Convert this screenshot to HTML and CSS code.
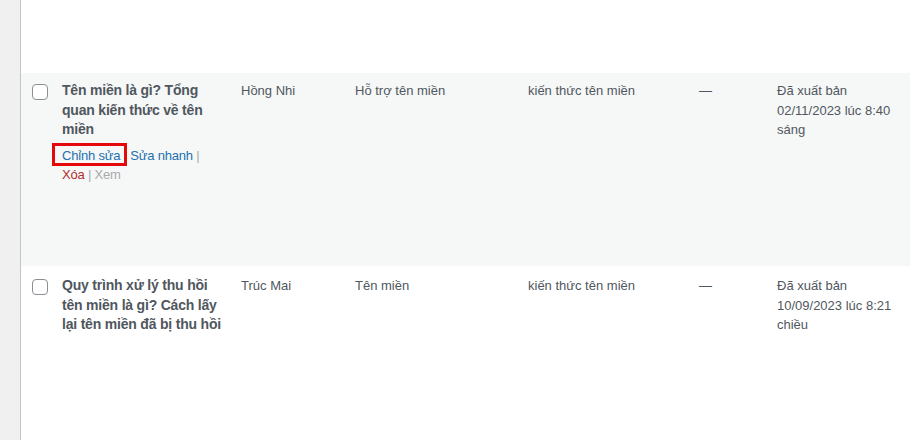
FILE: index.html
```html
<!DOCTYPE html>
<html lang="vi">
<head>
  <meta charset="UTF-8" />
  <meta name="viewport" content="width=device-width, initial-scale=1.0"/>
  <title>Bài viết</title>
  <link rel="stylesheet" href="styles.css">
</head>
<body>
  <div class="layout">
    <div class="sidebar"></div>

    <div class="content">
      <div class="row-end"></div>

      <table class="posts">
        <colgroup>
          <col class="c-check">
          <col class="c-title">
          <col class="c-author">
          <col class="c-cats">
          <col class="c-tags">
          <col class="c-comments">
          <col class="c-date">
        </colgroup>
        <tr class="alt">
          <td class="check"><span class="checkbox"></span></td>
          <td>
            <strong class="row-title">Tên miền là gì? Tổng quan kiến thức về tên miền</strong>
            <div class="row-actions">
              <span class="edit highlight"><a href="#">Chỉnh sửa</a></span> <span class="sep">|</span>
              <a href="#">Sửa nhanh</a> <span class="sep">|</span>
              <a href="#" class="trash">Xóa</a> <span class="sep">|</span>
              <a href="#" class="view">Xem</a>
            </div>
          </td>
          <td>Hồng Nhi</td>
          <td>Hỗ trợ tên miền</td>
          <td>kiến thức tên miền</td>
          <td>—</td>
          <td>Đã xuất bản<br>02/11/2023 lúc 8:40 sáng</td>
        </tr>
        <tr class="last">
          <td class="check"><span class="checkbox"></span></td>
          <td>
            <strong class="row-title">Quy trình xử lý thu hồi tên miền là gì? Cách lấy lại tên miền đã bị thu hồi</strong>
          </td>
          <td>Trúc Mai</td>
          <td>Tên miền</td>
          <td>kiến thức tên miền</td>
          <td>—</td>
          <td>Đã xuất bản<br>10/09/2023 lúc 8:21 chiều</td>
        </tr>
      </table>
    </div>
  </div>
</body>
</html>
```
FILE: styles.css
```css
body { margin: 0; font-family: "Liberation Sans", Arial, sans-serif; font-size: 13px; color: #50575e; }
.layout { display: flex; min-height: 440px; }
.sidebar { width: 20px; background: #f0f0f1; border-right: 1px solid #c3c4c7; flex-shrink: 0; }
.content { flex: 1; background: #fff; }
.row-end { height: 73px; }

.posts { width: 100%; border-collapse: collapse; table-layout: fixed; }
.c-check { width: 31px; }
.c-title { width: 179px; }
.c-author { width: 114px; }
.c-cats { width: 173px; }
.c-tags { width: 171px; }
.c-comments { width: 78px; }
.posts td { vertical-align: top; padding: 8px 10px; line-height: 19.5px; }
.posts tr.alt { background: #f6f7f7; height: 193px; }
.posts tr.last { height: 174px; }
.posts tr.last td { padding-top: 10px; }

.posts td.check { padding: 11px 0 0 11px; }
.posts tr.last td.check { padding-top: 13px; }
.checkbox { display: block; width: 14px; height: 14px; border: 1px solid #8c8f94; border-radius: 4px; background: #fff; }

.row-title { display: block; font-size: 14px; font-weight: 700; letter-spacing: -0.2px; color: #50575e; }
.row-actions { padding-top: 6px; color: #a7aaad; letter-spacing: -0.2px; }
.row-actions a { color: #2271b1; text-decoration: none; }
.row-actions a.trash { color: #b32d2e; }
.row-actions a.view { color: #a7aaad; }

.highlight { position: relative; }
.highlight::after { content: ""; position: absolute; left: -10px; right: -7px; top: -5px; bottom: -3px; border: 3px solid #e5090b; }
```
